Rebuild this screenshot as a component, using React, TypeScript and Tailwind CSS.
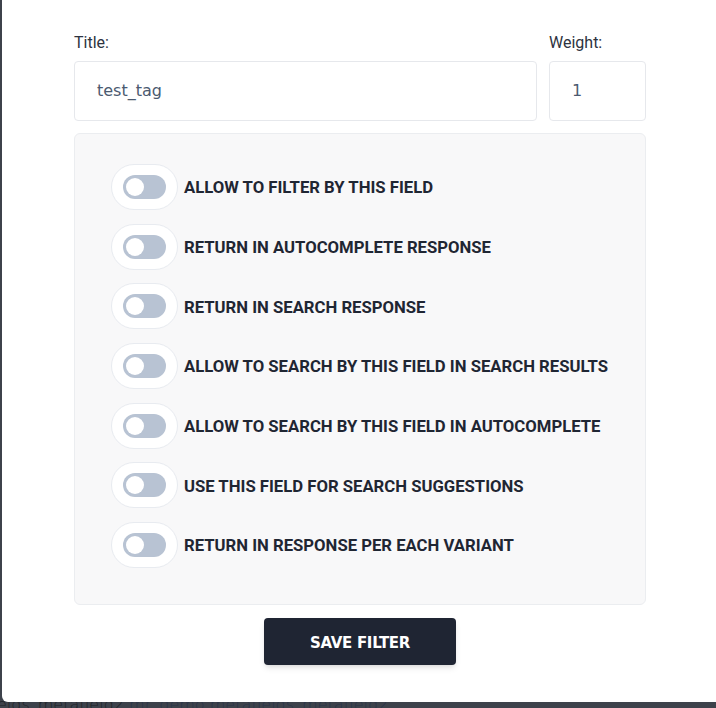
const OPTIONS = [
  "Allow to filter by this field",
  "Return in autocomplete response",
  "Return in search response",
  "Allow to search by this field in search results",
  "Allow to search by this field in autocomplete",
  "Use this field for search suggestions",
  "Return in response per each variant",
]

const Toggle = () => (
  <div className="flex h-[46px] w-[67px] shrink-0 items-center justify-center rounded-full border border-[#e8ebf0] bg-white">
    <div className="flex h-[24px] w-[43px] items-center rounded-full bg-[#b8c3d3] px-[3px]">
      <div className="h-[18px] w-[18px] rounded-full bg-white" />
    </div>
  </div>
)

export default function App() {
  return (
    <div className="relative h-[708px] w-[716px] overflow-hidden bg-[#3d424b]">
      {/* page behind the overlay */}
      <div className="pt-[697px] -ml-[3px] whitespace-nowrap text-[16px] leading-[16px] font-['DejaVu_Sans',sans-serif] font-light">
        <span className="text-[#1e2228]">elds_metafield2 </span>
        <span className="text-[#2a3449]">mr_demo metafields_metafield2</span>
      </div>

      {/* Modal */}
      <div className="absolute left-[2px] top-0 -right-[20px] h-[702px] rounded-bl-md bg-white pl-[72px] pt-[34px]">
        <div className="w-[572px]">
          <div className="flex gap-[12px] font-['Roboto',sans-serif]">
            <div className="flex flex-1 flex-col">
              <label className="mb-[9px] text-[16px] leading-[18px] text-[#2d3340]">Title:</label>
              <div className="flex h-[60px] items-center rounded-[4px] border border-[#e6e8ec] px-[22px] font-['DejaVu_Sans',sans-serif] text-[16px] text-[#4b5a70]">
                test_tag
              </div>
            </div>
            <div className="flex w-[97px] flex-col">
              <label className="mb-[9px] text-[16px] leading-[18px] text-[#2d3340]">Weight:</label>
              <div className="flex h-[60px] items-center rounded-[4px] border border-[#e6e8ec] px-[22px] font-['DejaVu_Sans',sans-serif] text-[16px] text-[#4b5a70]">
                1
              </div>
            </div>
          </div>

          {/* Options */}
          <div className="mt-[12px] flex flex-col gap-[13.67px] rounded-md border border-[#ebedf0] bg-[#f8f8f9] pt-[30px] pb-[36px] pl-[36px]">
            {OPTIONS.map((opt) => (
              <div key={opt} className="flex items-center gap-[6px]">
                <Toggle />
                <span className="pt-[2px] font-['Roboto',sans-serif] text-[16.7px] font-bold uppercase text-[#1f2633]">
                  {opt}
                </span>
              </div>
            ))}
          </div>

          <div className="mt-[13px] flex justify-center">
            <button className="h-[47px] w-[192px] rounded-[4px] bg-[#1f2533] pt-[3px] font-['DejaVu_Sans',sans-serif] text-[15px] font-bold tracking-[-0.3px] text-white shadow-md">
              SAVE FILTER
            </button>
          </div>
        </div>
      </div>
    </div>
  )
}
